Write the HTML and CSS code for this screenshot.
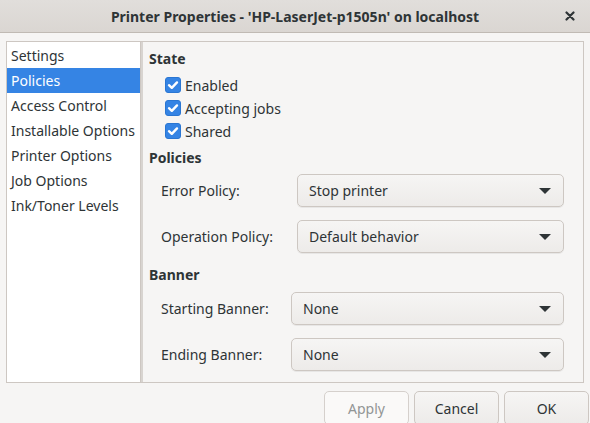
FILE: index.html
```html
<!DOCTYPE html>
<html>
<head>
<meta charset="utf-8">
<link rel="stylesheet" href="styles.css">
</head>
<body>
<div class="window">
  <header class="titlebar">
    <div class="title">Printer Properties - 'HP-LaserJet-p1505n' on localhost</div>
    <div class="close">
      <svg width="10" height="10" viewBox="0 0 10 10"><path d="M1.5 1.5 L8.5 8.5 M8.5 1.5 L1.5 8.5" stroke="#2e3436" stroke-width="2.2" stroke-linecap="round"/></svg>
    </div>
  </header>
  <div class="body">
    <div class="frame">
      <ul class="sidebar">
        <li>Settings</li>
        <li class="selected">Policies</li>
        <li>Access Control</li>
        <li>Installable Options</li>
        <li>Printer Options</li>
        <li>Job Options</li>
        <li>Ink/Toner Levels</li>
      </ul>
      <div class="handle"></div>
      <div class="content">
        <div class="heading">State</div>
        <div class="checks">
          <label class="check"><span class="box"><svg width="16" height="16" viewBox="0 0 16 16"><path d="M4 8.2 L6.8 10.8 L12 5.4" fill="none" stroke="#fff" stroke-width="2.4" stroke-linecap="round" stroke-linejoin="round"/></svg></span>Enabled</label>
          <label class="check"><span class="box"><svg width="16" height="16" viewBox="0 0 16 16"><path d="M4 8.2 L6.8 10.8 L12 5.4" fill="none" stroke="#fff" stroke-width="2.4" stroke-linecap="round" stroke-linejoin="round"/></svg></span>Accepting jobs</label>
          <label class="check"><span class="box"><svg width="16" height="16" viewBox="0 0 16 16"><path d="M4 8.2 L6.8 10.8 L12 5.4" fill="none" stroke="#fff" stroke-width="2.4" stroke-linecap="round" stroke-linejoin="round"/></svg></span>Shared</label>
        </div>
        <div class="heading h-policies">Policies</div>
        <div class="form form-policies">
          <div class="label">Error Policy:</div>
          <div class="combo"><span>Stop printer</span><span class="arrow"></span></div>
          <div class="label">Operation Policy:</div>
          <div class="combo"><span>Default behavior</span><span class="arrow"></span></div>
        </div>
        <div class="heading h-banner">Banner</div>
        <div class="form form-banner">
          <div class="label">Starting Banner:</div>
          <div class="combo"><span>None</span><span class="arrow"></span></div>
          <div class="label">Ending Banner:</div>
          <div class="combo"><span>None</span><span class="arrow"></span></div>
        </div>
      </div>
    </div>
    <div class="buttons">
      <button class="btn disabled">Apply</button>
      <button class="btn">Cancel</button>
      <button class="btn">OK</button>
    </div>
  </div>
</div>
</body>
</html>
```

FILE: styles.css
```css
html, body {
  margin: 0;
  padding: 0;
}
body {
  width: 590px;
  height: 423px;
  overflow: hidden;
  background: #f6f5f4;
  font-family: "Noto Sans", "DejaVu Sans", sans-serif;
  font-size: 14px;
  color: #2e3436;
}
.window {
  display: flex;
  flex-direction: column;
  height: 423px;
}
.titlebar {
  height: 32px;
  border-bottom: 1px solid #c0bab4;
  background: linear-gradient(#e1dedb, #dad6d2);
  display: flex;
  align-items: center;
  justify-content: center;
  position: relative;
  flex: none;
}
.title {
  font-weight: bold;
  font-size: 14px;
}
.close {
  position: absolute;
  right: 15px;
  top: 11px;
  width: 10px;
  height: 10px;
  display: flex;
}
.body {
  padding: 8px 1px 0 6px;
}
.frame {
  display: flex;
  height: 340px;
  width: 576px;
  border: 1px solid #cdc7c2;
}
.sidebar {
  list-style: none;
  margin: 0;
  padding: 1px 0 0 0;
  width: 133px;
  background: #ffffff;
  flex: none;
}
.sidebar li {
  height: 25px;
  line-height: 25px;
  padding-left: 4px;
}
.sidebar li.selected {
  background: #3584e4;
  color: #ffffff;
}
.handle {
  width: 3px;
  flex: none;
  background: #d8d4d0;
  border-left: 1px solid #cdc7c2;
  box-sizing: border-box;
}
.content {
  flex: 1;
  padding: 7px 19px 0 6px;
}
.heading {
  font-weight: bold;
  height: 20px;
  line-height: 20px;
}
.checks {
  display: flex;
  flex-direction: column;
  gap: 7px;
  margin-top: 8px;
  padding-left: 16px;
}
.check {
  display: flex;
  align-items: center;
  height: 16px;
  gap: 4px;
}
.box {
  width: 16px;
  height: 16px;
  border-radius: 3px;
  background: #3584e4;
  border: 1px solid #2a76d2;
  box-sizing: border-box;
  display: flex;
  align-items: center;
  justify-content: center;
}
.box svg {
  flex: none;
}
.h-policies {
  margin-top: 9px;
}
.h-banner {
  margin-top: 12px;
}
.form {
  display: grid;
  row-gap: 13px;
  padding-left: 12px;
  margin-top: 6px;
}
.form-policies {
  grid-template-columns: 136px 1fr;
}
.form-banner {
  grid-template-columns: 130px 1fr;
  margin-top: 7px;
}
.label {
  display: flex;
  align-items: center;
}
.combo {
  height: 33px;
  box-sizing: border-box;
  border: 1px solid #cdc7c2;
  border-radius: 5px;
  background: linear-gradient(#f6f5f4, #edebe9);
  box-shadow: 0 1px 0 rgba(0,0,0,0.06);
  display: flex;
  align-items: center;
  justify-content: space-between;
  padding: 0 12px 0 11px;
}
.arrow {
  width: 0;
  height: 0;
  border-left: 6px solid transparent;
  border-right: 6px solid transparent;
  border-top: 6px solid #2e3436;
}
.buttons {
  display: flex;
  justify-content: flex-end;
  gap: 5px;
  margin-top: 8px;
}
.btn {
  width: 85px;
  height: 34px;
  font-family: inherit;
  font-size: 14px;
  color: #2e3436;
  border: 1px solid #cdc7c2;
  border-radius: 5px;
  background: linear-gradient(#f6f5f4, #edebe9);
  box-shadow: 0 1px 0 rgba(0,0,0,0.06);
  padding: 0;
}
.btn.disabled {
  color: #929595;
  background: #faf9f8;
  border-color: #d5d0cc;
  box-shadow: none;
}
```
